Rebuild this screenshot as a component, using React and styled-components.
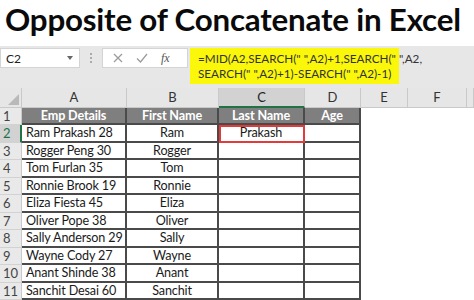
import React from "react";
import styled, { createGlobalStyle, css } from "styled-components";

const Global = createGlobalStyle`
  html, body { margin: 0; padding: 0; background: #fff; }
  body { width: 474px; height: 300px; overflow: hidden; font-family: Lato, "Open Sans", sans-serif; }
  * { box-sizing: border-box; }
`;

const Page = styled.div`
  width: 474px;
  height: 300px;
  display: flex;
  flex-direction: column;
  overflow: hidden;
`;

const Title = styled.h1`
  margin: 0;
  height: 46px;
  padding: 2px 0 0 5px;
  font-family: Lato, sans-serif;
  font-weight: 700;
  font-size: 31.3px;
  line-height: 34px;
  color: #0a0a0a;
  white-space: nowrap;
  letter-spacing: -0.2px;
`;

const FormulaBar = styled.div`
  height: 42px;
  background: #e7e7e7;
  display: flex;
  align-items: flex-start;
  padding-top: 2px;
`;

const NameBox = styled.div`
  width: 80px;
  height: 20px;
  background: #fff;
  border: 1px solid #d4d4d4;
  display: flex;
  align-items: center;
  justify-content: space-between;
  padding: 0 6px 0 5px;
  font-family: Lato, sans-serif;
  font-size: 12px;
  color: #222;
`;

const Arrow = styled.span`
  width: 0;
  height: 0;
  border-left: 3px solid transparent;
  border-right: 3px solid transparent;
  border-top: 4px solid #666;
`;

const Dots = styled.div`
  width: 22px;
  height: 20px;
  display: flex;
  flex-direction: column;
  align-items: center;
  justify-content: center;
  gap: 2px;
  & > span { width: 2px; height: 2px; background: #aaa; }
`;

const FxBox = styled.div`
  width: 86px;
  height: 20px;
  background: #fff;
  border: 1px solid #d4d4d4;
  display: flex;
  align-items: center;
  padding-left: 10px;
  gap: 13px;
  color: #888;
`;

const Fx = styled.span`
  font-family: "Liberation Serif", serif;
  font-style: italic;
  font-size: 12px;
  color: #555;
`;

const Formula = styled.div`
  width: 209px;
  height: 36px;
  margin-left: 2px;
  background: #fbf70a;
  padding: 3px 0 0 8px;
  font-family: Lato, sans-serif;
  font-size: 11.7px;
  line-height: 15px;
  color: #333;
  white-space: pre;
`;

const Grid = styled.div`
  display: grid;
  grid-template-columns: 22px 105px 92px 86px 56px 47px 59px 7px;
  grid-template-rows: 19.5px repeat(11, 17.5px);
  font-family: Lato, sans-serif;
  font-size: 12.6px;
  letter-spacing: -0.15px;
  color: #1a1a1a;
`;

const Cell = styled.div`
  display: flex;
  align-items: center;
  justify-content: ${(p) => (p.$align === "left" ? "flex-start" : "center")};
  padding-left: ${(p) => (p.$align === "left" ? "4px" : "0")};
  white-space: nowrap;
  overflow: hidden;
  background: #fff;
  ${(p) =>
    p.$kind === "corner" &&
    css`
      background: #e6e6e6;
      border-right: 1px solid #c9c9c9;
      border-bottom: 1px solid #c9c9c9;
      justify-content: flex-end;
      align-items: flex-end;
      padding: 0 2px 2px 0;
    `}
  ${(p) =>
    p.$kind === "col" &&
    css`
      background: ${p.$active ? "#d2d2d2" : "#e6e6e6"};
      border-right: 1px solid #c9c9c9;
      border-bottom: ${p.$active ? "2px solid #217346" : "1px solid #c9c9c9"};
      color: ${p.$active ? "#222" : "#333"};
      font-size: 13px;
      letter-spacing: 0;
    `}
  ${(p) =>
    p.$kind === "row" &&
    css`
      background: ${p.$active ? "#d2d2d2" : "#e9e9e9"};
      border-bottom: 1px solid #d2d2d2;
      border-right: ${p.$active ? "2px solid #217346" : "1px solid #c9c9c9"};
      justify-content: flex-start;
      padding-left: 3px;
      color: ${p.$active ? "#217346" : "#444"};
      font-size: 13px;
      letter-spacing: 0;
    `}
  ${(p) =>
    p.$kind === "head" &&
    css`
      background: #7f7f7f;
      color: #fff;
      font-weight: 700;
      border-right: 2px solid #4a4a4a;
      border-bottom: 2px solid #4a4a4a;
    `}
  ${(p) =>
    p.$kind === "data" &&
    css`
      border-right: 2px solid #4a4a4a;
      border-bottom: 2px solid #4a4a4a;
    `}
  ${(p) =>
    p.$selected &&
    css`
      outline: 2px solid #e23b3b;
      outline-offset: -2px;
    `}
`;

const Corner = styled.span`
  width: 0;
  height: 0;
  border-left: 11px solid transparent;
  border-bottom: 11px solid #b9b9b9;
`;

const rows = [
  ["Ram Prakash 28", "Ram"],
  ["Rogger Peng 30", "Rogger"],
  ["Tom Furlan 35", "Tom"],
  ["Ronnie Brook 19", "Ronnie"],
  ["Eliza Fiesta 45", "Eliza"],
  ["Oliver Pope 38", "Oliver"],
  ["Sally Anderson 29", "Sally"],
  ["Wayne Cody 27", "Wayne"],
  ["Anant Shinde 38", "Anant"],
  ["Sanchit Desai 60", "Sanchit"],
];

export default function App() {
  return (
    <Page>
      <Global />
      <Title>Opposite of Concatenate in Excel</Title>
      <FormulaBar>
        <NameBox>
          C2
          <Arrow />
        </NameBox>
        <Dots>
          <span />
          <span />
          <span />
        </Dots>
        <FxBox>
          <svg width="10" height="10" viewBox="0 0 10 10">
            <path d="M1 1L9 9M9 1L1 9" stroke="#9a9a9a" strokeWidth="1.2" />
          </svg>
          <svg width="12" height="10" viewBox="0 0 12 10">
            <path d="M1 5.5L4.5 9L11 1" stroke="#9a9a9a" strokeWidth="1.2" fill="none" />
          </svg>
          <Fx>fx</Fx>
        </FxBox>
        <Formula>{`=MID(A2,SEARCH(" ",A2)+1,SEARCH(" ",A2,\nSEARCH(" ",A2)+1)-SEARCH(" ",A2)-1)`}</Formula>
      </FormulaBar>
      <Grid>
        <Cell $kind="corner">
          <Corner />
        </Cell>
        {["A", "B", "C", "D", "E", "F", ""].map((l) => (
          <Cell key={l || "G"} $kind="col" $active={l === "C"}>
            {l}
          </Cell>
        ))}
        <Cell $kind="row">1</Cell>
        <Cell $kind="head">Emp Details</Cell>
        <Cell $kind="head">First Name</Cell>
        <Cell $kind="head">Last Name</Cell>
        <Cell $kind="head">Age</Cell>
        <Cell />
        <Cell />
        <Cell />
        {rows.map(([emp, first], i) => (
          <React.Fragment key={emp}>
            <Cell $kind="row" $active={i === 0}>
              {i + 2}
            </Cell>
            <Cell $kind="data" $align="left">
              {emp}
            </Cell>
            <Cell $kind="data">{first}</Cell>
            <Cell $kind="data" $selected={i === 0}>
              {i === 0 ? "Prakash" : ""}
            </Cell>
            <Cell $kind="data" />
            <Cell />
            <Cell />
            <Cell />
          </React.Fragment>
        ))}
      </Grid>
    </Page>
  );
}
